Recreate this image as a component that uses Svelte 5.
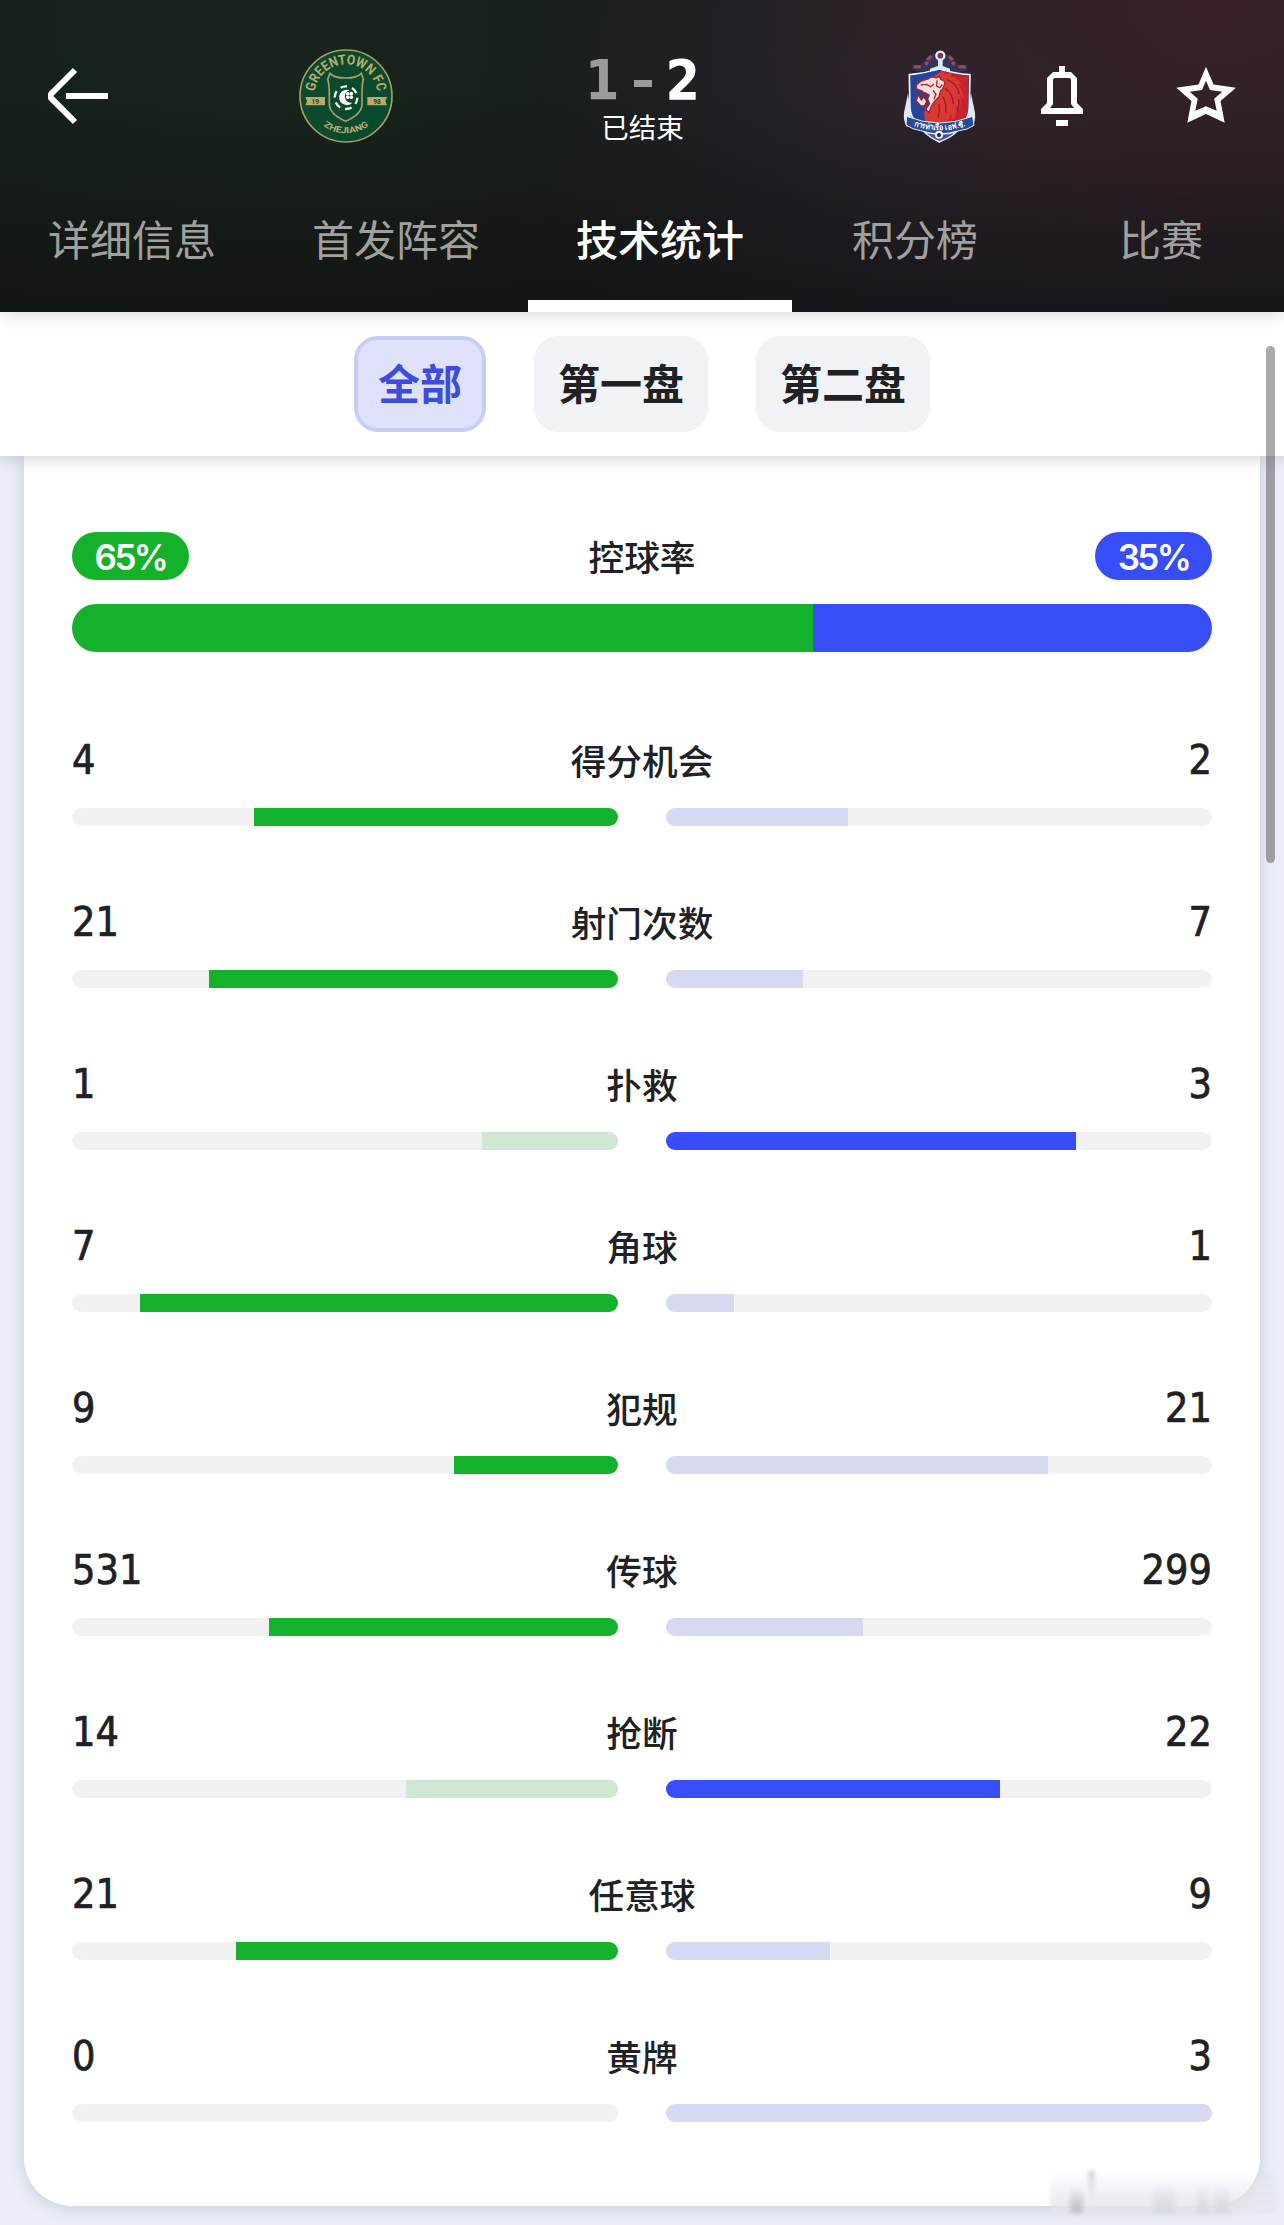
<script lang="ts">
    type Stat = {
        label: string;
        home: number;
        away: number;
        lead: "home" | "away" | "none";
    };

    const tabs = ["详细信息", "首发阵容", "技术统计", "积分榜", "比赛"];
    const periods = ["全部", "第一盘", "第二盘"];

    const possession = { home: 65, away: 35 };

    const stats: Stat[] = [
        { label: "得分机会", home: 4, away: 2, lead: "home" },
        { label: "射门次数", home: 21, away: 7, lead: "home" },
        { label: "扑救", home: 1, away: 3, lead: "away" },
        { label: "角球", home: 7, away: 1, lead: "home" },
        { label: "犯规", home: 9, away: 21, lead: "home" },
        { label: "传球", home: 531, away: 299, lead: "home" },
        { label: "抢断", home: 14, away: 22, lead: "away" },
        { label: "任意球", home: 21, away: 9, lead: "home" },
        { label: "黄牌", home: 0, away: 3, lead: "none" },
    ];

    let activeTab = $state("技术统计");
    let activePeriod = $state("全部");

    const share = (value: number, other: number) => (value / (value + other)) * 100;
</script>

<div class="page">
    <header>
        <div class="match">
            <button class="icon back" aria-label="返回">
                <svg width="60" height="60" viewBox="0 0 60 60">
                    <path d="M27 5 3.500 28.500a3.500 3.500 0 0 0 0 5L27 57M18 31h42" />
                </svg>
            </button>

            <svg class="home-logo" width="110" height="110" viewBox="0 0 330 330">
                <defs>
                    <path id="arc-top" d="M73 168a95 95 0 0 1 190 0" />
                    <path id="arc-bottom" d="M56 168a112 112 0 0 0 224 0" />
                </defs>
                <circle cx="168" cy="168" r="138" fill="#0b4a2c" stroke="#a99d63" stroke-width="5" />
                <text class="crest-name" font-size="41">
                    <textPath href="#arc-top" startOffset="50%" textLength="272" lengthAdjust="spacingAndGlyphs">GREENTOWN FC</textPath>
                </text>
                <text class="crest-name" font-size="26">
                    <textPath href="#arc-bottom" startOffset="50%" textLength="146" lengthAdjust="spacingAndGlyphs">ZHEJIANG</textPath>
                </text>
                <path d="M46 171h59v25H46l5-12zM291 171h-59v25h59l-5-12z" fill="#bda868" />
                <text class="crest-year" x="76" y="191">19</text>
                <text class="crest-year" x="261" y="191">98</text>
                <path
                    d="M120 100q12 14 47 14t47-14l6 18q-4 12-4 50v24q0 30-49 52-49-22-49-52v-24q0-38-5-50z"
                    fill="#0b4a2c"
                    stroke="#a99d63"
                    stroke-width="5"
                />
                <circle cx="168" cy="173" r="34" fill="none" stroke="#eef6ef" stroke-width="7" stroke-dasharray="20 15.600" />
                <path d="M179 151a23 23 0 1 0 8 37 18 18 0 1 1-8-37z" fill="#fff" />
                <g fill="#fff">
                    <circle cx="173" cy="161" r="5.500" />
                    <circle cx="184" cy="161" r="5.500" />
                    <circle cx="173" cy="172" r="5.500" />
                    <circle cx="184" cy="172" r="5.500" />
                </g>
            </svg>

            <div class="result">
                <div class="score">
                    <span class="lost">1</span>
                    <span class="dash"></span>
                    <span>2</span>
                </div>
                <div class="status">已结束</div>
            </div>

            <svg class="away-logo" width="100" height="110" viewBox="0 0 300 330">
                <path d="M68 90 66 76h26l22-27 18-9h36l18 9 18 27h28l-3 16-79 12z" fill="#323459" />
                <path d="M72 80h20M205 80h22M112 60l12-12M188 60l-12-12M106 74l8-8M194 74l-8-8" stroke="#a84557" stroke-width="9" />
                <circle cx="151" cy="47" r="12" fill="#7d3450" stroke="#e8edf5" stroke-width="7" />
                <path d="M144 60h14v18l22 8v8h-60v-8l24-8z" fill="#dce5f3" />
                <path d="M54 160 42 218q-3 24 9 44l14-16zM243 160l12 58q3 24-9 44l-14-16z" fill="#dfe7f2" />
                <path
                    d="M58 104q45-3 90-17 47 14 92 17l-2 98q0 52-90 104-88-52-88-104z"
                    fill="#25459d"
                    stroke="#eef1f8"
                    stroke-width="5"
                />
                <path d="M150 92q48 12 86 15l-2 104q-2 22-20 38l-98-3z" fill="#c4242c" />
                <path d="M150 90l-26 30 4 60-14 66-30-6-20-40-1-92z" fill="#25459d" />
                <!-- mane -->
                <path
                    d="M126 116q14-20 43-24l-9 11 28-5-7 11q24 4 34 25l-12-3q17 20 17 45l-10-12q6 28-3 47l-8-14q2 27-9 42l-8-17q-3 20-19 25l-36-2-12 3-10-6-2-18 2-30z"
                    fill="#dd3734"
                />
                <!-- head -->
                <path
                    d="M80 134q14-14 34-17 10-10 24-3l10-4 5 9q14 2 10 15-3 12-11 18l-5 18-14 15-9 14-7 19-8-8-1-12-16-1-13-14 5-19 10 16 9-10-5-16-20-8z"
                    fill="#f4dfd9"
                    stroke="#a92434"
                    stroke-width="4"
                />
                <path d="M92 159l12-4 16 9-5 13 6 14-8 13-12-5 7-15-9-14-7-3z" fill="#792c48" />
                <path d="M92 135l18-2 12 7 10-8M141 121l-1 17 9 5 8-9M129 151l9 12-6 15" fill="none" stroke="#b42635" stroke-width="4" />
                <path
                    d="M171 119q29 10 37 43M165 145q23 13 25 47M158 170q12 17 9 48M146 192q5 18-2 40M206 177q3 20-4 37"
                    fill="none"
                    stroke="#8e202d"
                    stroke-width="4"
                />
                <path d="M103 276q47 12 96 0-18 18-51 29-27-11-45-29z" fill="#4d548c" stroke="#e3e8f1" stroke-width="4" />
                <path d="M50 229q98 40 198 0l4 27q-20 14-44 16-60 19-116 0-26-4-44-17z" fill="#284b94" stroke="#e7edf7" stroke-width="3" />
                <path id="arc-port" d="M58 255q90 30 182-1" fill="none" />
                <text class="crest-port">
                    <textPath href="#arc-port" startOffset="50%" textLength="158" lengthAdjust="spacingAndGlyphs">การท่าเรือ เอฟ.ซี.</textPath>
                </text>
                <circle cx="147" cy="284" r="12" fill="#eef1f6" />
                <path d="M147 278l7 5-3 8h-8l-3-8z" fill="#252a4c" />
            </svg>

            <button class="icon bell" aria-label="通知">
                <svg width="60" height="64" viewBox="0 0 60 64">
                    <path
                        class="solid"
                        d="M27 3h6v6h6l6 6v25l6 6v5H9v-5l6-6V15l6-6h6zM23 15q-2 0-2 2v24l-3 4h24l-3-4V17q0-2-2-2zM24 57h12v6H24z"
                    />
                </svg>
            </button>
            <button class="icon star" aria-label="收藏">
                <svg width="60" height="60" viewBox="0 0 60 60">
                    <path
                        class="solid"
                        d="M30 1.700 37.500 19.500 60 22.700 44.500 36 48.700 57.700 30 49 11.300 57.700 15.500 36 .3 22.700 22.500 19.500zM30 15.700 26 25 13.700 26.700 21.800 33.700 19.300 45.700 30 41.200 40.700 45.700 38.200 33.700 46.300 26.700 34 25z"
                    />
                </svg>
            </button>
        </div>

        <nav class="tabs">
            {#each tabs as tab}
                <button class="tab" class:active={tab === activeTab} onclick={() => (activeTab = tab)}>
                    {tab}
                </button>
            {/each}
        </nav>
    </header>

    <div class="periods">
        {#each periods as period}
            <button class="period" class:active={period === activePeriod} onclick={() => (activePeriod = period)}>
                {period}
            </button>
        {/each}
    </div>

    <main>
        <section class="card">
            <div class="possession">
                <div class="row">
                    <span class="pill home">{possession.home}%</span>
                    <span class="label">控球率</span>
                    <span class="pill away">{possession.away}%</span>
                </div>
                <div class="split">
                    <div class="home" style="width: {possession.home}%"></div>
                    <div class="away" style="width: {possession.away}%"></div>
                </div>
            </div>

            {#each stats as stat}
                <div class="stat">
                    <div class="row">
                        <span class="value">{stat.home}</span>
                        <span class="label">{stat.label}</span>
                        <span class="value right">{stat.away}</span>
                    </div>
                    <div class="bars">
                        <div class="track reverse">
                            <div
                                class="fill home"
                                class:dim={stat.lead !== "home"}
                                style="width: {share(stat.home, stat.away)}%"
                            ></div>
                        </div>
                        <div class="track">
                            <div
                                class="fill away"
                                class:dim={stat.lead !== "away"}
                                style="width: {share(stat.away, stat.home)}%"
                            ></div>
                        </div>
                    </div>
                </div>
            {/each}
        </section>
    </main>

    <div class="scrollbar"></div>
    <div class="smudge">
        <i class="tall"></i>
        <i class="thin"></i>
        <i class="block"></i>
        <i class="block second"></i>
        <i class="block third"></i>
        <i class="edge"></i>
    </div>
</div>

<style>
    :global(body) {
        margin: 0;
        background: #ebeef7;
    }

    .page {
        position: relative;
        width: 1284px;
        height: 2225px;
        overflow: hidden;
        background: #ebeef7;
        color: #202124;
        font-family: Roboto, "Noto Sans CJK SC", sans-serif;
    }

    button {
        padding: 0;
        border: none;
        background: none;
        color: inherit;
        font-family: inherit;
        cursor: pointer;
    }

    svg {
        display: block;
    }

    header {
        position: relative;
        z-index: 3;
        height: 312px;
        background:
            linear-gradient(to bottom, rgba(16, 16, 18, 0) 30%, rgba(16, 16, 18, 0.65) 100%),
            radial-gradient(ellipse 520px 360px at 1220px 0, #382126, rgba(54, 33, 40, 0) 100%),
            radial-gradient(ellipse 460px 420px at 1000px 110px, #2b2530, rgba(40, 36, 48, 0) 100%),
            radial-gradient(ellipse 460px 420px at 250px 20px, #18251d, rgba(22, 35, 26, 0) 100%),
            linear-gradient(to right, #151e16, #191d19 45%, #1b1c1f 55%, #242026);
        box-shadow: 0 2px 16px rgba(0, 0, 0, 0.16);
        color: #fff;
    }

    .match {
        display: flex;
        align-items: center;
        height: 190px;
        padding: 0 48px;
    }

    .icon path {
        fill: none;
        stroke: #fff;
        stroke-width: 6;
    }

    .icon .solid {
        fill: #fff;
        fill-rule: evenodd;
        stroke: none;
    }

    .home-logo {
        margin-left: 182px;
    }

    .crest-name {
        fill: #b9aa6b;
        font-family: Roboto, sans-serif;
        font-weight: 700;
        text-anchor: middle;
    }

    .crest-year {
        fill: #24472d;
        font-size: 20px;
        font-weight: 700;
        text-anchor: middle;
    }

    .crest-port {
        fill: #fff;
        font-size: 24px;
        font-weight: 700;
        text-anchor: middle;
    }

    .result {
        display: flex;
        flex-direction: column;
        align-items: center;
        width: 485px;
        padding: 13px 5px 0 0;
    }

    .score {
        display: flex;
        align-items: center;
        gap: 14px;
        height: 55px;
        font-family: "DejaVu Sans Condensed", "DejaVu Sans", sans-serif;
        font-size: 55px;
        font-stretch: condensed;
        font-weight: 700;
        line-height: 55px;
    }

    .lost {
        color: #9b9b9b;
    }

    .dash {
        width: 18px;
        height: 7px;
        margin-top: 5px;
        background: #9b9b9b;
    }

    .status {
        font-size: 27.5px;
        line-height: 42px;
    }

    .bell {
        margin-left: 42px;
    }

    .star {
        margin-left: 84px;
    }

    .tabs {
        display: flex;
        height: 122px;
    }

    .tab {
        box-sizing: border-box;
        flex: 1 1 78px;
        padding: 0 0 16px;
        border-bottom: 12px solid transparent;
        color: #a0a09f;
        font-size: 42px;
        white-space: nowrap;
    }

    .tab:nth-child(-n + 3) {
        flex-basis: 96px;
    }

    .tab.active {
        border-color: #fff;
        color: #fff;
        font-weight: 500;
    }

    .periods {
        position: relative;
        z-index: 2;
        display: flex;
        align-items: center;
        justify-content: center;
        gap: 48px;
        height: 144px;
        background: #fff;
        box-shadow: 0 2px 16px rgba(0, 0, 0, 0.18);
    }

    .period {
        box-sizing: border-box;
        height: 96px;
        padding: 0 24px 6px;
        border-radius: 24px;
        background: #f1f2f6;
        font-size: 42px;
        font-weight: 700;
    }

    .period.active {
        padding: 0 20px 6px;
        border: 4px solid #c7cdf5;
        background: #e0e2fd;
        color: #3d4ddb;
    }

    main {
        padding: 0 24px;
    }

    .card {
        box-sizing: border-box;
        height: 1750px;
        padding: 76px 48px 0;
        border-radius: 0 0 48px 48px;
        background: #fff;
        box-shadow: 0 2px 16px rgba(20, 30, 60, 0.16);
    }

    .possession {
        margin-bottom: 80px;
    }

    .row {
        display: grid;
        grid-template-columns: 1fr auto 1fr;
        align-items: center;
        height: 48px;
    }

    .label {
        padding-top: 6px;
        font-size: 35.7px;
        font-weight: 500;
        line-height: 42px;
    }

    .pill {
        justify-self: start;
        box-sizing: border-box;
        width: 117px;
        height: 48px;
        border-radius: 24px;
        color: #fff;
        font-family: Inter, sans-serif;
        font-size: 35px;
        font-weight: 600;
        letter-spacing: -2.6px;
        line-height: 50px;
        text-align: center;
    }

    .pill.away {
        justify-self: end;
    }

    .home {
        background: #14b22b;
    }

    .away {
        background: #374df5;
    }

    .split {
        display: flex;
        height: 48px;
        margin-top: 24px;
        border-radius: 24px;
        overflow: hidden;
    }

    .stat {
        height: 162px;
    }

    .stat .row {
        height: 56px;
    }

    .value {
        font-family: "DejaVu Sans Condensed", "DejaVu Sans", sans-serif;
        font-size: 41px;
        font-stretch: condensed;
        line-height: 48px;
        -webkit-text-stroke: 0.7px #202124;
    }

    .value.right {
        text-align: right;
    }

    .bars {
        display: grid;
        grid-template-columns: 1fr 1fr;
        gap: 48px;
        margin-top: 20px;
    }

    .track {
        display: flex;
        height: 18px;
        border-radius: 9px;
        overflow: hidden;
        background: #f1f1f1;
    }

    .track.reverse {
        justify-content: flex-end;
    }

    .fill.home.dim {
        background: #cfe8d4;
    }

    .fill.away.dim {
        background: #d7d8f1;
    }

    .scrollbar {
        position: absolute;
        z-index: 4;
        top: 346px;
        right: 9px;
        width: 9px;
        height: 517px;
        border-radius: 5px;
        background: rgba(60, 60, 60, 0.44);
    }

    /* blurred stamp over the lower right corner */
    .smudge {
        position: absolute;
        right: 8px;
        bottom: 12px;
        width: 226px;
        height: 41px;
        background: linear-gradient(to bottom, rgba(238, 239, 243, 0), #e3e5eb);
        filter: blur(2px);
    }

    .smudge i {
        position: absolute;
        bottom: 0;
        left: 20px;
        width: 13px;
        height: 27px;
        background: linear-gradient(to bottom, rgba(180, 182, 188, 0), #bcbec4);
    }

    .smudge .thin {
        bottom: 12px;
        left: 38px;
        width: 7px;
        height: 30px;
        background: linear-gradient(to top, rgba(200, 202, 208, 0), #d2d3d7);
    }

    .smudge .block {
        left: 103px;
        width: 22px;
        height: 30px;
        background: linear-gradient(to bottom, rgba(210, 212, 220, 0), #d6d8df);
    }

    .smudge .second {
        left: 147px;
        width: 12px;
    }

    .smudge .third {
        left: 164px;
        width: 16px;
    }

    .smudge .edge {
        left: 208px;
        width: 15px;
        height: 36px;
        background: repeating-linear-gradient(to bottom, #d9dce3 0 2px, #e7eaf1 2px 8px);
    }
</style>
